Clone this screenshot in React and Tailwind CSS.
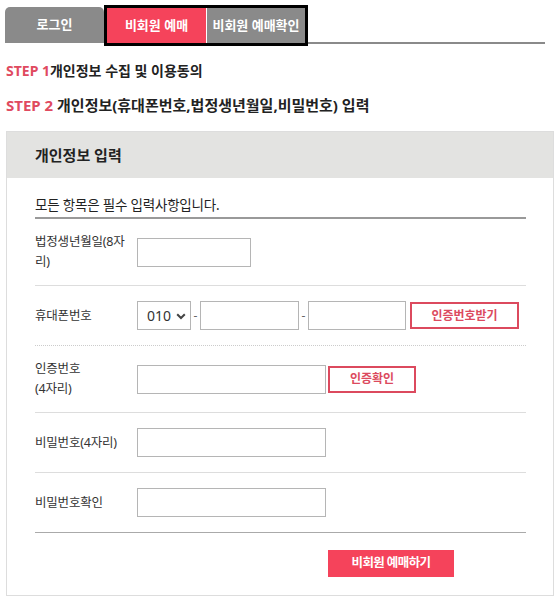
import React, { useState } from 'react';

const PINK = 'bg-[#f5435b]';

const Field = ({ className = '' }) => (
  <input
    type="text"
    className={`h-[29px] border border-[#b5b5b5] bg-white px-2 text-[13px] outline-none ${className}`}
  />
);

const Row = ({ label, children, tall = false, divider = 'border-b border-[#dddddd]' }) => (
  <div className={`flex items-center ${tall ? 'py-[13px]' : 'pt-[15px] pb-[15px]'} ${divider}`}>
    <div className="w-[102px] shrink-0 text-[12.5px] leading-[20px] tracking-[-0.2px] text-[#333]">
      {label}
    </div>
    <div className="flex items-center">{children}</div>
  </div>
);

const OutlineButton = ({ children, className = '' }) => (
  <button
    type="button"
    className={`h-[27px] border-2 border-[#dc4a5e] bg-white text-[12px] font-bold text-[#dc4a5e] ${className}`}
  >
    {children}
  </button>
);

const App = () => {
  const [tab, setTab] = useState('guest');
  const [prefix, setPrefix] = useState('010');

  return (
    <div className="w-[560px] min-h-[599px] bg-white pt-[5px] font-['Noto_Sans','Noto_Sans_CJK_KR',sans-serif]">
      {/* 탭 */}
      <div className="flex items-end w-[545px] pl-[5px]">
        <button
          type="button"
          onClick={() => setTab('login')}
          className="mb-[3px] h-[36px] w-[99px] rounded-t-[5px] bg-[#8a8a8a] text-[13px] font-bold text-white"
        >
          로그인
        </button>
        <div className="flex h-[41px] w-[204px] border-[3px] border-black">
          <button
            type="button"
            onClick={() => setTab('guest')}
            className={`w-[99px] ${PINK} text-[13px] font-bold text-white`}
          >
            비회원 예매
          </button>
          <button
            type="button"
            onClick={() => setTab('check')}
            className="flex-1 border-l border-white bg-[#8a8a8a] text-[13px] font-bold text-white"
          >
            비회원 예매확인
          </button>
        </div>
        <div className="mb-[2px] h-[2px] flex-1 bg-[#8a8a8a]" />
      </div>

      {/* 단계 안내 */}
      <p className="mt-[14px] pl-[6px] text-[14px] font-bold leading-[22px] text-[#222]">
        <span className="text-[#e04a5f]">STEP 1</span>개인정보 수집 및 이용동의
      </p>
      <p className="mt-[12px] pl-[6px] text-[15px] font-bold leading-[22px] text-[#222]">
        <span className="text-[#e04a5f]">STEP 2</span> 개인정보(휴대폰번호,법정생년월일,비밀번호) 입력
      </p>

      {/* 입력 패널 */}
      <div className="mt-[15px] ml-[6px] w-[548px] border border-[#dddddd]">
        <div className="flex h-[46px] items-center bg-[#e3e3e1] pl-[28px] text-[15px] font-bold text-[#222]">
          개인정보 입력
        </div>

        <div className="pl-[28px] pr-[27px]">
          <div className="border-b-2 border-[#999] pt-[17px] pb-[2px] text-[13.5px] leading-[20px] tracking-[-0.2px] text-[#222]">
            모든 항목은 필수 입력사항입니다.
          </div>

          <Row label={<>법정생년월일(8자<br />리)</>} tall>
            <Field className="w-[114px]" />
          </Row>

          <Row label="휴대폰번호" divider="border-b border-dotted border-[#cccccc]">
            <div className="relative">
              <select
                value={prefix}
                onChange={(e) => setPrefix(e.target.value)}
                className="h-[29px] w-[54px] appearance-none border border-[#b5b5b5] bg-white pl-[9px] text-[14px] text-[#333] outline-none"
              >
                <option>010</option>
                <option>011</option>
                <option>016</option>
                <option>017</option>
              </select>
              <svg
                className="pointer-events-none absolute right-[5px] top-[12px]"
                width="10"
                height="7"
                viewBox="0 0 10 7"
              >
                <path d="M1.2 1.2l3.8 3.8 3.8-3.8" fill="none" stroke="#444" strokeWidth="2" />
              </svg>
            </div>
            <span className="w-[9px] text-center text-[12px] text-[#666]">-</span>
            <Field className="w-[99px]" />
            <span className="w-[9px] text-center text-[12px] text-[#666]">-</span>
            <Field className="w-[98px]" />
            <OutlineButton className="ml-[4px] w-[109px]">인증번호받기</OutlineButton>
          </Row>

          <Row label={<>인증번호<br />(4자리)</>} tall>
            <Field className="w-[189px]" />
            <OutlineButton className="ml-[2px] w-[88px]">인증확인</OutlineButton>
          </Row>

          <Row label="비밀번호(4자리)">
            <Field className="w-[189px]" />
          </Row>

          <Row label="비밀번호확인" divider="border-b border-[#aaaaaa]">
            <Field className="w-[189px]" />
          </Row>

          <div className="pt-[16px] pb-[18px]">
            <button
              type="button"
              className={`ml-[293px] h-[27px] w-[126px] ${PINK} text-[12.5px] font-bold tracking-[-0.6px] text-white`}
            >
              비회원 예매하기
            </button>
          </div>
        </div>
      </div>
    </div>
  );
};

export default App;
